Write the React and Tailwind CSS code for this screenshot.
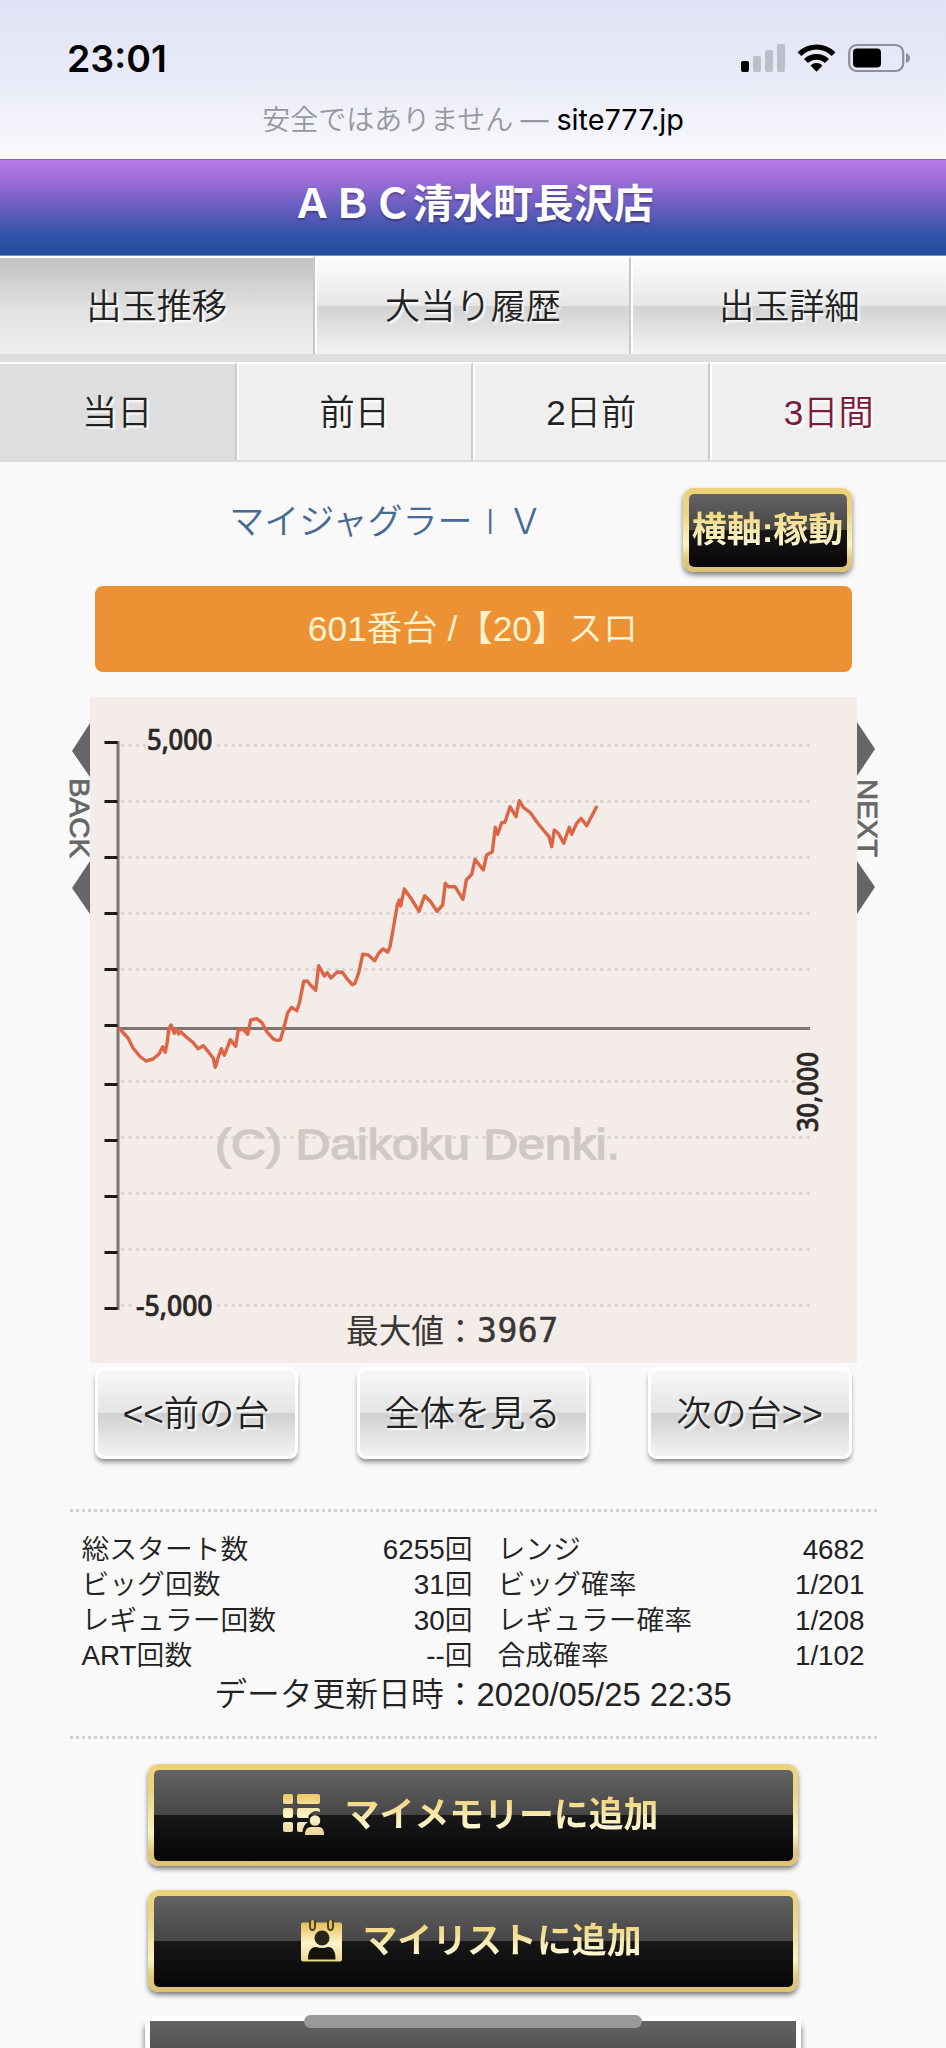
import React, { useState } from 'react';

const tabs = ['出玉推移', '大当り履歴', '出玉詳細'];

const days = ['当日', '前日', '2日前', '3日間'];

const stats = [
  ['総スタート数', '6255回', 'レンジ', '4682'],
  ['ビッグ回数', '31回', 'ビッグ確率', '1/201'],
  ['レギュラー回数', '30回', 'レギュラー確率', '1/208'],
  ['ART回数', '--回', '合成確率', '1/102'],
];

const ticks = [742.5, 801.5, 857.5, 913.5, 969.5, 1025.5, 1084.5, 1140.5, 1196.5, 1252.5, 1308.5];
const gridLines = [745.5, 801.5, 857.5, 913.5, 969.5, 1081.5, 1137.5, 1193.5, 1249.5, 1305.5];

const line =
  '119,1028 128,1038 133,1048 140,1056.5 146,1061 153,1059 159,1054 162.7,1046.7 165.3,1052.3 167.3,1041.7 168.7,1029.3 171,1025 174.3,1033.3 176.3,1029.3 178.7,1034 180.7,1031.7 186,1036.7 193.3,1042.7 198,1048.7 203.3,1045.7 208.3,1051.7 213.3,1058.3 215.3,1067.3 218,1058.3 221.3,1048.7 224.3,1055.3 227.7,1046.7 230.3,1039.7 235.7,1046.3 238.3,1030 243.3,1029.3 247.7,1034.3 250.7,1020 256.7,1018.7 261.7,1022.3 266.7,1031.7 273.3,1039 276.7,1040.3 280.3,1040 283.3,1030 287.7,1012.7 291.7,1007.3 296.7,1010.7 299.3,1003.3 303.7,981.3 307.3,981 311.3,986 315.7,990.3 318.7,965.7 324.3,976 327.3,972.7 331,978 337.3,972 342.3,972.3 346.7,978.3 352.3,984.7 355,983.3 359,971.7 362.7,954.3 368.3,955 374.7,960.7 378.7,953.3 383,949 387.7,952 390,946.7 393.3,928.3 397.3,905 399.3,900 400.7,906 404.3,889 411.7,899.3 419,911.3 424.7,895.7 430.7,901.7 437,911.3 442.7,905 445.3,883.3 448.3,886.7 455,886.7 463,899.3 466.3,880 471.7,874.3 475,859.3 483.3,870 486.7,855 492.3,851.7 495.3,827.3 497.7,834.3 501.7,822.7 505,822.3 510,806.7 516,816.7 519.3,800.7 523.3,807.3 530,812.3 536.7,821.7 543.3,830 549,836.7 551.7,846.7 554.3,830 558.3,833.3 563.7,843.3 569.3,827.3 571.7,834.3 576.7,823.3 581,818.3 586.7,825.7 597,806';

const StatusBar = () => (
  <div className="h-[159px] bg-gradient-to-b from-[#e0e2f6] via-[#e9ebf8] to-[#fafafd] font-['Inter','Noto_Sans_CJK_JP',sans-serif]">
    <div className="flex h-[93px] items-start justify-between pl-[67px] pr-[36px] pt-[36px]">
      <span className="text-[37.5px] font-semibold leading-[45px] text-black">23:01</span>
      <svg width="170" height="30" viewBox="0 0 170 30" className="mt-[7px]">
        <rect x="1" y="18" width="8" height="11" rx="2" fill="#000" />
        <rect x="13" y="13" width="8" height="16" rx="2" fill="#bcbec9" />
        <rect x="25" y="7" width="8" height="22" rx="2" fill="#bcbec9" />
        <rect x="37" y="1" width="8" height="28" rx="2" fill="#bcbec9" />
        <path d="M57.5 9.2 L61.3 13 A21 21 0 0 1 91.7 13 L95.5 9.2 A27 27 0 0 0 57.5 9.2Z" fill="#000" />
        <path d="M64 16 L68 20 A12.5 12.5 0 0 1 85 20 L89 16 A18 18 0 0 0 64 16Z" fill="#000" />
        <path d="M70.5 22.5 L76.5 28.7 L82.5 22.5 A8.5 8.5 0 0 0 70.5 22.5Z" fill="#000" />
        <rect x="109.2" y="2" width="54" height="26" rx="7.5" fill="none" stroke="#8e8f9c" strokeWidth="2.2" />
        <rect x="113" y="5.5" width="28" height="19" rx="4" fill="#000" />
        <path d="M166 10 Q170 11.5 170 15 T166 20Z" fill="#8e8f9c" />
      </svg>
    </div>
    <div className="flex h-[54px] items-center justify-center gap-[8px] text-[28px] text-[#97989f]">
      <span className="font-[350]">安全ではありません</span>
      <span className="-ml-px">—</span>
      <span className="text-[28.8px] text-black">site777.jp</span>
    </div>
  </div>
);

const GoldButton = ({ className, children }) => (
  <button
    type="button"
    className={`rounded-[10px] bg-[linear-gradient(#ebd27a_0%,#ecd480_25%,#faf3c0_68%,#e0c878_85%,#dcc373_100%)] p-[5.5px] shadow-[0_3px_5px_rgba(0,0,0,0.5)] ${className}`}
  >
    <span className="flex h-full items-center justify-center rounded-[5px] bg-[linear-gradient(#636363_0%,#464646_50%,#181818_50%,#060606_100%)] font-bold whitespace-nowrap">
      {children}
    </span>
  </button>
);

const GoldText = ({ children }) => (
  <span className="bg-[linear-gradient(#f0d780_15%,#fdf5cf_80%)] bg-clip-text leading-[50px] text-transparent">{children}</span>
);

const SilverButton = ({ className, children }) => (
  <button
    type="button"
    className={`h-[92px] rounded-[9px] border-[3px] border-white bg-[linear-gradient(#f8f8f8_0%,#e4e4e4_50%,#d0d0d0_50%,#f3f3f3_100%)] pt-[2px] text-[35.2px] font-[350] whitespace-nowrap shadow-[0_4px_5px_-1px_rgba(0,0,0,0.45)] [text-shadow:2px_2px_2px_#fff] ${className}`}
  >
    {children}
  </button>
);

const Chart = () => (
  <svg width="767" height="666" viewBox="90 697 767 666" className="block bg-[#f3ece8]">
    {gridLines.map((y) => (
      <line key={y} x1="121" x2="810" y1={y} y2={y} stroke="#d8d0cd" strokeWidth="2.5" strokeDasharray="3.4 3.97" />
    ))}
    <text x="215" y="1159" fontSize="43" textLength="405" lengthAdjust="spacingAndGlyphs" fill="#cfc8c5" stroke="#cfc8c5" strokeWidth="1.4" className="font-['Liberation_Sans',sans-serif]">
      (C) Daikoku Denki.
    </text>
    <line x1="118" x2="118" y1="741" y2="1310" stroke="#7d7573" strokeWidth="3" />
    <line x1="118" x2="810" y1="1028.5" y2="1028.5" stroke="#7d7573" strokeWidth="3" />
    {ticks.map((y) => (
      <line key={y} x1="104.5" x2="117.5" y1={y} y2={y} stroke="#1c1817" strokeWidth="3" />
    ))}
    <polyline points={line} fill="none" stroke="#dd6546" strokeWidth="3.4" strokeLinejoin="round" />
    <g fill="#2a2726" fontSize="28" fontWeight="500" stroke="#2a2726" strokeWidth="0.7" className="font-['Noto_Sans',sans-serif]">
      <rect x="146" y="740" width="68" height="9" fill="#f3ece8" stroke="none" />
      <text x="147" y="750" textLength="65.5" lengthAdjust="spacingAndGlyphs">5,000</text>
      <rect x="136" y="1300" width="78" height="9" fill="#f3ece8" stroke="none" />
      <text x="136" y="1316" textLength="76.5" lengthAdjust="spacingAndGlyphs">-5,000</text>
      <rect x="796" y="1050" width="24" height="82" fill="#f3ece8" stroke="none" />
      <text transform="translate(818 1132) rotate(-90)" textLength="80" lengthAdjust="spacingAndGlyphs">30,000</text>
    </g>
    <text x="346" y="1343" fontSize="32.7" fill="#3a3635" className="font-['Noto_Sans_CJK_JP',sans-serif]">最大値：</text>
    <text x="477" y="1342" fontSize="33" textLength="81" fill="#3a3635" stroke="#3a3635" strokeWidth="0.5" className="font-['DejaVu_Sans_Mono',monospace]">3967</text>
  </svg>
);

const MemoryIcon = () => (
  <svg width="42" height="42" viewBox="0 0 42 42">
    <defs>
      <linearGradient id="goldMemory" x1="0" y1="0" x2="0" y2="42" gradientUnits="userSpaceOnUse">
        <stop offset="0" stopColor="#ecc863" />
        <stop offset="0.5" stopColor="#fdf4c8" />
        <stop offset="1" stopColor="#e6d39b" />
      </linearGradient>
    </defs>
    <g fill="url(#goldMemory)">
      <rect x="0" y="0" width="10" height="10" rx="2" />
      <rect x="14" y="0" width="23" height="10" rx="2" />
      <rect x="0" y="14" width="10" height="10" rx="2" />
      <path d="M16 14H35Q37 14 37 18Q32 15.5 28 19Q25 21 25.5 24H16Q14 24 14 22V16Q14 14 16 14Z" />
      <rect x="0" y="28" width="10" height="10" rx="2" />
      <path d="M16 28H25Q20 31 19.5 38H16Q14 38 14 36V30Q14 28 16 28Z" />
      <circle cx="32" cy="26.5" r="5.3" />
      <path d="M22 41Q22 33 28 33H36Q41 33 41 41Z" />
    </g>
  </svg>
);

const ListIcon = () => (
  <svg width="42" height="42" viewBox="0 0 42 42">
    <defs>
      <linearGradient id="goldList" x1="0" y1="0" x2="0" y2="42" gradientUnits="userSpaceOnUse">
        <stop offset="0" stopColor="#e2b64c" />
        <stop offset="0.55" stopColor="#fdf4c8" />
        <stop offset="1" stopColor="#e9d68f" />
      </linearGradient>
    </defs>
    <rect x="0" y="2.5" width="41" height="39" rx="2" fill="url(#goldList)" />
    <path d="M8 0V6Q8 11 11.5 11T15 6V0ZM26 0V6Q26 11 29.5 11T33 6V0Z" fill="#4b431f" />
    <rect x="10" y="0" width="3" height="9" rx="1.5" fill="#e2c05f" />
    <rect x="28" y="0" width="3" height="9" rx="1.5" fill="#e2c05f" />
    <circle cx="21" cy="18" r="7.5" fill="#27241a" />
    <path d="M7 39.5Q7 27 15 27Q21 29 27 27Q34.5 27 34.5 39.5Z" fill="#15130d" />
  </svg>
);

const App = () => {
  const [tab, setTab] = useState(0);
  const [day, setDay] = useState(0);

  return (
    <div className="relative h-[2048px] w-[946px] overflow-hidden bg-[#f9f9f9] font-['Liberation_Sans','Noto_Sans_CJK_JP',sans-serif] text-[#222]">
      <StatusBar />

      <header className="flex h-[97px] items-center justify-center border-y border-t-[#8d6aa5] border-b-[#6f93c8] bg-[linear-gradient(#b878e4_0%,#a770dc_15%,#5f5bbb_55%,#3052a8_80%,#1f4c98_100%)] pb-[5px]">
        <h1 className="text-[40.2px] font-bold text-white [text-shadow:0_2px_2px_rgba(0,0,0,0.3)]">ＡＢＣ清水町長沢店</h1>
      </header>

      <nav className="grid h-[106px] grid-cols-3 border-b-[8px] border-[#dedede]">
        {tabs.map((name, i) => (
          <button
            key={name}
            type="button"
            onClick={() => setTab(i)}
            className={`border-t-2 border-r-2 border-t-white border-r-[#c8c8c8] pt-[2px] text-[35.2px] font-[350] [text-shadow:2px_2px_2px_#fff] last:border-r-0 ${
              tab === i
                ? 'bg-[linear-gradient(#c2c2c2_0%,#e2e2e2_55%,#efefef_100%)]'
                : 'border-l-2 border-l-white bg-[linear-gradient(#fdfdfd_0%,#e6e6e6_50%,#d2d2d2_50%,#f3f3f3_100%)]'
            }`}
          >
            {name}
          </button>
        ))}
      </nav>

      <nav className="grid h-[100px] grid-cols-4 border-b-2 border-[#dcdcdc]">
        {days.map((name, i) => (
          <button
            key={name}
            type="button"
            onClick={() => setDay(i)}
            className={`border-t-2 border-r-2 border-t-white border-r-[#cccccc] pt-[2px] text-[35.2px] font-[350] [text-shadow:2px_2px_2px_#fff] last:border-r-0 last:text-[#7c1a3c] ${
              day === i ? 'bg-[#dedede]' : 'border-l-2 border-l-white bg-[#efefef]'
            }`}
          >
            {name}
          </button>
        ))}
      </nav>

      <main>
        <div className="mt-[26px] flex h-[98px] items-start pl-[95px]">
          <p className="mt-[8px] w-[588px] pr-[6px] text-center text-[35px] leading-[52px] font-[350] text-[#466a94]">
            マイジャグラー<span className="inline-block w-[35px] text-center font-['Roboto',sans-serif] font-light">I</span>Ｖ
          </p>
          <GoldButton className="h-[84px] w-[169px] text-[35px]">
            <GoldText>横軸:稼動</GoldText>
          </GoldButton>
        </div>

        <div className="mx-auto flex h-[86px] w-[757px] items-center justify-center rounded-[8px] bg-[#ec9235] pt-[1px] text-[35.4px] font-[350] text-[#fff3cf]">
          601番台 /【20】スロ
        </div>

        <div className="mt-[25px] flex pl-[60px]">
          <svg width="30" height="220" viewBox="60 697 30 220" className="overflow-visible">
            <path d="M90 723L72 751L90 777ZM90 861L72 888L90 914Z" fill="#666" />
            <text transform="translate(70 778) rotate(90)" fontSize="28" textLength="80" lengthAdjust="spacingAndGlyphs" fill="#666" stroke="#666" strokeWidth="0.8">BACK</text>
          </svg>
          <Chart />
          <svg width="30" height="220" viewBox="857 697 30 220" className="overflow-visible">
            <path d="M857 722L875 749L857 776ZM857 861L875 887L857 914Z" fill="#666" />
            <text transform="translate(857.5 779) rotate(90)" fontSize="28" textLength="78" lengthAdjust="spacingAndGlyphs" fill="#666" stroke="#666" strokeWidth="0.8">NEXT</text>
          </svg>
        </div>

        <div className="mx-auto mt-[4px] flex w-[757px] justify-between">
          <SilverButton className="w-[203px]">&lt;&lt;前の台</SilverButton>
          <SilverButton className="w-[232px]">全体を見る</SilverButton>
          <SilverButton className="w-[204px]">次の台&gt;&gt;</SilverButton>
        </div>

        <section className="mx-auto mt-[50px] h-[230px] w-[807px] border-y-[3px] border-dotted border-[#cfcfcf] px-[12px] pt-[20px]">
          {stats.map(([label, value, label2, value2]) => (
            <div key={label} className="flex h-[35.5px] items-center text-[27.8px] font-[350]">
              <span>{label}</span>
              <span className="ml-auto">{value}</span>
              <div className="ml-[25px] flex w-[367px] justify-between">
                <span>{label2}</span>
                <span>{value2}</span>
              </div>
            </div>
          ))}
          <p className="text-center text-[32.8px] leading-[41px] font-[350]">データ更新日時：2020/05/25 22:35</p>
        </section>

        <div className="mt-[25px] flex flex-col items-center gap-[24px]">
          <GoldButton className="h-[102px] w-[650px] text-[34.9px]">
            <MemoryIcon />
            <span className="w-[19px]" />
            <span className="mr-[4px]">
              <GoldText>マイメモリーに追加</GoldText>
            </span>
          </GoldButton>
          <GoldButton className="h-[102px] w-[650px] text-[34.9px]">
            <ListIcon />
            <span className="w-[19px]" />
            <span className="mr-[3px]">
              <GoldText>マイリストに追加</GoldText>
            </span>
          </GoldButton>
          <div className="h-[60px] w-[656px] border-[5px] border-white bg-[linear-gradient(#636363_0%,#464646_100%)] shadow-[0_10px_6px_rgba(0,0,0,0.6)]" />
        </div>
      </main>

      <div className="absolute top-[2015px] left-[304px] h-[13px] w-[338px] rounded-full bg-[#999]" />
    </div>
  );
};

export default App;
